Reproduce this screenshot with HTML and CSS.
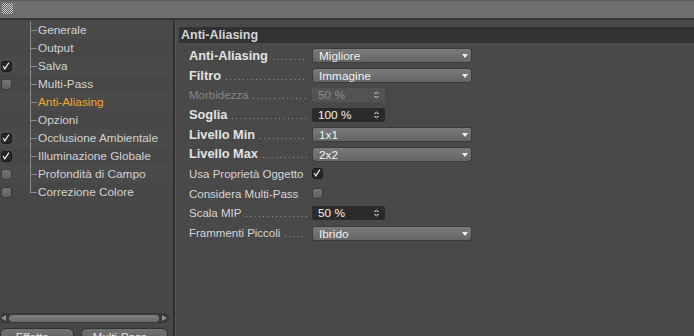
FILE: index.html
```html
<!DOCTYPE html>
<html lang="it">
<head>
    <meta charset="UTF-8" />
    <title>Impostazioni di Render - Anti-Aliasing</title>
    <link rel="stylesheet" href="styles.css">
</head>
<body>
    <div class="topbar"><div class="grip"></div></div>

    <div class="main">
        <aside class="sidebar">
            <ul class="tree">
                <li class="item"><span class="check none"></span><span class="tick"></span>Generale</li>
                <li class="item"><span class="check none"></span><span class="tick"></span>Output</li>
                <li class="item"><span class="check on"><svg viewBox="0 0 12 12"><path d="M2.5 6 L4.5 9.5 L9.5 2" /></svg></span><span class="tick"></span>Salva</li>
                <li class="item"><span class="check off"></span><span class="tick"></span>Multi-Pass</li>
                <li class="item active"><span class="check none"></span><span class="tick"></span>Anti-Aliasing</li>
                <li class="item"><span class="check none"></span><span class="tick"></span>Opzioni</li>
                <li class="item"><span class="check on"><svg viewBox="0 0 12 12"><path d="M2.5 6 L4.5 9.5 L9.5 2" /></svg></span><span class="tick"></span>Occlusione Ambientale</li>
                <li class="item"><span class="check on"><svg viewBox="0 0 12 12"><path d="M2.5 6 L4.5 9.5 L9.5 2" /></svg></span><span class="tick"></span>Illuminazione Globale</li>
                <li class="item"><span class="check off"></span><span class="tick"></span>Profondità di Campo</li>
                <li class="item last"><span class="check off"></span><span class="tick"></span>Correzione Colore</li>
            </ul>
            <div class="spacer"></div>
            <div class="hscroll">
                <span class="arrow left"></span>
                <span class="thumb"></span>
                <span class="arrow right"></span>
            </div>
            <div class="buttons">
                <button class="tab-btn first">Effetto...</button>
                <button class="tab-btn second">Multi-Pass...</button>
            </div>
        </aside>

        <section class="content">
            <h2 class="group">Anti-Aliasing</h2>
            <div class="form">
                <div class="row">
                    <label class="lbl bold"><span>Anti-Aliasing</span><span class="dots"></span></label>
                    <div class="select">Migliore<span class="caret"></span></div>
                </div>
                <div class="row">
                    <label class="lbl bold"><span>Filtro</span><span class="dots"></span></label>
                    <div class="select">Immagine<span class="caret"></span></div>
                </div>
                <div class="row">
                    <label class="lbl disabled"><span>Morbidezza</span><span class="dots"></span></label>
                    <div class="number disabled">50 %<span class="spin"></span></div>
                </div>
                <div class="row">
                    <label class="lbl bold"><span>Soglia</span><span class="dots"></span></label>
                    <div class="number">100 %<span class="spin"></span></div>
                </div>
                <div class="row">
                    <label class="lbl bold"><span>Livello Min</span><span class="dots"></span></label>
                    <div class="select">1x1<span class="caret"></span></div>
                </div>
                <div class="row">
                    <label class="lbl bold"><span>Livello Max</span><span class="dots"></span></label>
                    <div class="select">2x2<span class="caret"></span></div>
                </div>
                <div class="row">
                    <label class="lbl"><span>Usa Proprietà Oggetto</span></label>
                    <span class="check on"><svg viewBox="0 0 12 12"><path d="M2.5 6 L4.5 9.5 L9.5 2" /></svg></span>
                </div>
                <div class="row">
                    <label class="lbl"><span>Considera Multi-Pass</span></label>
                    <span class="check off"></span>
                </div>
                <div class="row">
                    <label class="lbl"><span>Scala MIP</span><span class="dots"></span></label>
                    <div class="number">50 %<span class="spin"></span></div>
                </div>
                <div class="row">
                    <label class="lbl"><span>Frammenti Piccoli</span><span class="dots"></span></label>
                    <div class="select">Ibrido<span class="caret"></span></div>
                </div>
            </div>
        </section>
    </div>
</body>
</html>
```

FILE: styles.css
```css
html, body {
    margin: 0;
    padding: 0;
}
body {
    width: 694px;
    height: 336px;
    overflow: hidden;
    background: #494949;
    font-family: "Liberation Sans", Arial, sans-serif;
    font-size: 11px;
    color: #d6d6d6;
}
.topbar {
    height: 17px;
    background: #6f6f6f;
    border-top: 1px solid #5e5e5e;
    border-bottom: 2px solid #363636;
    position: relative;
}
.grip {
    position: absolute;
    left: 2px;
    top: 2px;
    width: 11px;
    height: 11px;
    background: repeating-conic-gradient(#cfcfcf 0 25%, #5a5a5a 0 50%) 0 0 / 2px 2px;
}
.main {
    display: flex;
    height: 316px;
}

/* colonna sinistra */
.sidebar {
    width: 173px;
    flex: none;
    background: #474747;
    border-right: 2px solid #303030;
    display: flex;
    flex-direction: column;
}
.tree {
    list-style: none;
    margin: 1px 0 0;
    padding: 0;
}
.item {
    height: 18px;
    line-height: 18px;
    display: flex;
    align-items: center;
    position: relative;
    font-size: 11.8px;
    color: #d2d2d2;
    white-space: nowrap;
}
.item:nth-child(odd) {
    background: #4a4a4a;
}
.item::before {
    content: "";
    position: absolute;
    left: 30px;
    top: 0;
    bottom: 0;
    border-left: 1px solid #8a8a8a;
}
.item.last::before {
    bottom: 9px;
}
.item.active {
    color: #f5a623;
}
.tick {
    width: 7px;
    height: 1px;
    background: #8a8a8a;
    margin: 0 1px 0 18px;
}
.item .check {
    margin-left: 1px;
}
.check {
    width: 11px;
    height: 11px;
    border-radius: 3px;
    flex: none;
    box-sizing: border-box;
}
.check.none {
    visibility: hidden;
}
.check.on {
    background: #262626;
    border: 1px solid #1c1c1c;
}
.check.off {
    background: linear-gradient(#757575, #5f5f5f);
    border: 1px solid #3a3a3a;
}
.check svg {
    display: block;
    width: 10px;
    height: 10px;
    margin: -1px 0 0 -1px;
}
.check path {
    fill: none;
    stroke: #f2f2f2;
    stroke-width: 1.4;
}
.spacer {
    flex: 1;
}
.hscroll {
    height: 10px;
    margin: 0 4px 5px 0;
    background: #383838;
    border-radius: 5px;
    display: flex;
    align-items: center;
}
.thumb {
    flex: 1;
    height: 7px;
    margin: 0 3px;
    border-radius: 4px;
    background: linear-gradient(#7e7e7e, #6a6a6a);
}
.arrow {
    width: 0;
    height: 0;
    border-top: 3px solid transparent;
    border-bottom: 3px solid transparent;
}
.arrow.left {
    border-right: 5px solid #8c8c8c;
    margin-left: 1px;
}
.arrow.right {
    border-left: 5px solid #8c8c8c;
    margin-right: 2px;
}
.buttons {
    display: flex;
    gap: 7px;
    height: 8px;
    overflow: hidden;
}
.tab-btn {
    height: 16px;
    border: 1px solid #333;
    border-radius: 6px 6px 0 0;
    background: linear-gradient(#727272, #5e5e5e);
    color: #e0e0e0;
    font-family: inherit;
    font-size: 11.5px;
    padding: 1px 0 0;
    text-align: center;
}
.tab-btn.first {
    width: 74px;
}
.tab-btn.second {
    width: 87px;
}

/* pannello destro */
.content {
    flex: 1;
    padding-top: 7px;
    border-left: 1px solid #565656;
}
.group {
    margin: 0 0 0 3px;
    height: 16px;
    line-height: 16px;
    background: #323232;
    font-size: 12.5px;
    font-weight: bold;
    color: #d4d4d4;
    padding-left: 2px;
}
.form {
    padding: 3px 0 0 13px;
}
.row {
    display: grid;
    grid-template-columns: 118px 160px;
    column-gap: 5px;
    align-items: center;
    height: 19.7px;
}
.lbl {
    display: flex;
    align-items: flex-end;
    height: 14px;
    line-height: 14px;
    white-space: nowrap;
    color: #d6d6d6;
    font-size: 11.5px;
}
.lbl.bold {
    font-weight: bold;
    font-size: 12.8px;
    color: #e2e2e2;
}
.lbl.disabled {
    color: #858585;
}
.dots {
    flex: 1;
    height: 1px;
    margin: 0 0 3px 5px;
    background: linear-gradient(to right, #9a9a9a 1px, transparent 1px) 0 0 / 4.3px 1px repeat-x;
}
.select {
    position: relative;
    height: 15px;
    line-height: 14px;
    box-sizing: border-box;
    border: 1px solid #3c3c3c;
    border-radius: 3px;
    background: linear-gradient(#7a7a7a, #656565);
    padding-left: 6px;
    font-size: 11.8px;
    color: #f0f0f0;
}
.caret {
    position: absolute;
    right: 3px;
    top: 5px;
    border-left: 3.5px solid transparent;
    border-right: 3.5px solid transparent;
    border-top: 4px solid #eee;
}
.number {
    position: relative;
    width: 73px;
    height: 14px;
    line-height: 14px;
    box-sizing: border-box;
    background: #2b2b2b;
    border-radius: 2px;
    padding-left: 6px;
    font-size: 11.8px;
    color: #f0f0f0;
}
.number.disabled {
    background: #535353;
    color: #8a8a8a;
}
.spin {
    position: absolute;
    right: 6px;
    top: 3px;
    width: 5px;
    height: 8px;
    background:
        linear-gradient(to bottom right, transparent 50%, #9a9a9a 50%) 0 0 / 2.5px 3px no-repeat,
        linear-gradient(to bottom left, transparent 50%, #9a9a9a 50%) 2.5px 0 / 2.5px 3px no-repeat,
        linear-gradient(to top right, transparent 50%, #9a9a9a 50%) 0 5px / 2.5px 3px no-repeat,
        linear-gradient(to top left, transparent 50%, #9a9a9a 50%) 2.5px 5px / 2.5px 3px no-repeat;
}
.row .check {
    margin-left: 0;
}
```
